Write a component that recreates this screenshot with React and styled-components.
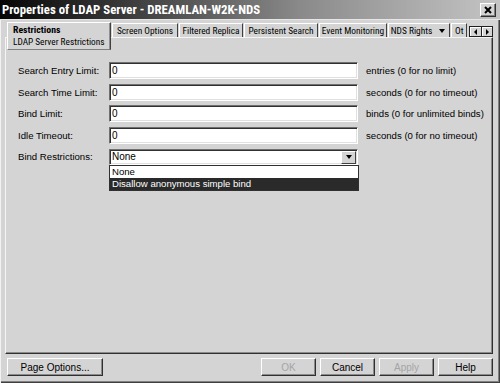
import React from "react";
import styled, { createGlobalStyle } from "styled-components";

const Global = createGlobalStyle`
  html, body { margin: 0; padding: 0; background: #d4d4d4; }
  * { box-sizing: border-box; }
`;

const BG = "#d4d4d4";
const UI = `"Liberation Sans", Arial, sans-serif`;
const NARROW = `"Roboto Condensed", "Liberation Sans", sans-serif`;

const Window = styled.div`
  width: 500px;
  height: 383px;
  background: ${BG};
  display: flex;
  flex-direction: column;
  box-shadow: inset 1px 0 0 #f2f2f2, inset -1px -1px 0 #404040, inset -2px -2px 0 #808080;
  font-family: ${UI};
  overflow: hidden;
`;

const TitleBar = styled.div`
  height: 20px;
  flex: none;
  display: flex;
  align-items: center;
  justify-content: space-between;
  padding: 0 4px 0 2px;
  background: linear-gradient(to right, #060606 0%, #3a3a3a 25%, #8a8a8a 60%, #c4c4c4 100%);
  border-bottom: 1px solid #e6e6e6;
`;

const Title = styled.div`
  font-family: ${NARROW};
  font-weight: bold;
  font-size: 12.8px;
  color: #fff;
  white-space: nowrap;
`;

const CloseBtn = styled.div`
  width: 16px;
  height: 14px;
  background: ${BG};
  border-top: 1px solid #fff;
  border-left: 1px solid #fff;
  border-right: 1px solid #303030;
  border-bottom: 1px solid #303030;
  box-shadow: inset -1px -1px 0 #808080;
  display: flex;
  align-items: center;
  justify-content: center;
`;

const Body = styled.div`
  flex: 1;
  display: flex;
  flex-direction: column;
  padding: 2px 7px 0 5px;
`;

const TabBar = styled.div`
  height: 15px;
  flex: none;
  display: flex;
  align-items: flex-start;
  padding-left: 2px;
`;

const TabList = styled.div`
  flex: 1;
  min-width: 0;
  display: flex;
  align-items: flex-start;
  overflow-x: clip;
  overflow-y: visible;
  position: relative;
  z-index: 2;
`;

const Tab = styled.div`
  flex: none;
  width: ${(p) => (p.$w ? `${p.$w}px` : "auto")};
  margin-top: ${(p) => (p.$active ? "0" : "1px")};
  margin-left: ${(p) => (p.$active ? "0" : "1px")};
  height: ${(p) => (p.$active ? "28px" : "14px")};
  background: ${BG};
  border-top: 1px solid #fff;
  border-left: 1px solid #fff;
  border-right: 1px solid #404040;
  border-bottom: ${(p) => (p.$active ? "1px solid #808080" : "none")};
  box-shadow: ${(p) => (p.$active ? "inset -1px 0 0 #909090" : "none")};
  padding: ${(p) => (p.$active ? "1px 0 0 5px" : "0 3px")};
  font-family: ${NARROW};
  font-size: 9.4px;
  line-height: 12px;
  color: #000;
  white-space: nowrap;
  display: flex;
  flex-direction: column;
  justify-content: ${(p) => (p.$active ? "flex-start" : "center")};
  align-items: ${(p) => (p.$active ? "flex-start" : "center")};
  overflow: hidden;
`;

const TabInner = styled.span`
  display: flex;
  align-items: center;
  gap: 7px;
  padding-right: 2px;
`;

const TabTitle = styled.span`
  font-weight: bold;
  font-size: 9.8px;
  line-height: 12px;
`;

const TabSub = styled.span`
  font-size: 9.3px;
  line-height: 11px;
`;

const TabArrows = styled.div`
  flex: none;
  margin-top: 4px;
  margin-left: 1px;
  display: flex;
  border: 1px solid #202020;
  background: ${BG};
  position: relative;
  z-index: 2;
`;

const ArrowBtn = styled.div`
  width: 11px;
  height: 9px;
  display: flex;
  align-items: center;
  justify-content: center;
  border-left: ${(p) => (p.$right ? "1px solid #202020" : "none")};
  box-shadow: inset 1px 1px 0 #fff;
`;

const Panel = styled.div`
  flex: 1;
  border-top: 1px solid #f4f4f4;
  border-left: 1px solid #f4f4f4;
  border-right: 1px solid #303030;
  border-bottom: 1px solid #303030;
  box-shadow: inset -1px -1px 0 #8a8a8a;
  padding: 24px 0 0 12px;
`;

const Form = styled.div`
  display: grid;
  grid-template-columns: 91px 249px 1fr;
  grid-auto-rows: 17px;
  row-gap: 4.5px;
  align-items: center;
`;

const Label = styled.div`
  font-size: 9.6px;
  color: #000;
  white-space: nowrap;
`;

const Input = styled.div`
  height: ${(p) => (p.$short ? "16px" : "17px")};
  background: #fff;
  border-top: 1px solid #707070;
  border-left: 1px solid #707070;
  border-right: 1px solid #fff;
  border-bottom: 1px solid #fff;
  box-shadow: inset 1px 1px 0 #303030, inset -1px -1px 0 #e0e0e0;
  padding-left: 2px;
  font-size: 10px;
  line-height: 15px;
  color: #000;
  position: relative;
  display: flex;
  align-items: center;
`;

const Unit = styled.div`
  padding-left: 8px;
  font-size: 9.6px;
  color: #000;
  white-space: nowrap;
`;

const SelectBtn = styled.div`
  position: absolute;
  right: 1px;
  top: 1px;
  width: 15px;
  height: 13px;
  background: ${BG};
  border-top: 1px solid #fff;
  border-left: 1px solid #fff;
  border-right: 1px solid #404040;
  border-bottom: 1px solid #404040;
  display: flex;
  align-items: center;
  justify-content: center;
`;

const DropList = styled.div`
  position: absolute;
  left: -1px;
  top: 15px;
  width: 250px;
  background: #fff;
  border: 1px solid #303030;
  z-index: 5;
`;

const DropItem = styled.div`
  height: 12px;
  padding-left: 2px;
  font-size: 9.6px;
  line-height: 12px;
  color: ${(p) => (p.$sel ? "#fff" : "#000")};
  background: ${(p) => (p.$sel ? "#2a2a2a" : "#fff")};
  white-space: nowrap;
`;

const Footer = styled.div`
  flex: none;
  display: flex;
  justify-content: space-between;
  padding: 4px 0 7px 2px;
`;

const BtnGroup = styled.div`
  display: flex;
  gap: 4px;
`;

const Button = styled.div`
  width: ${(p) => p.$w || 55}px;
  height: 18px;
  background: ${BG};
  border-top: 1px solid #fff;
  border-left: 1px solid #fff;
  border-right: 1px solid #303030;
  border-bottom: 1px solid #303030;
  box-shadow: inset -1px -1px 0 #8a8a8a;
  display: flex;
  align-items: center;
  justify-content: center;
  font-size: 10px;
  color: ${(p) => (p.$disabled ? "#a4a4a4" : "#000")};
`;

const Tri = ({ dir = "down" }) => {
  const pts = {
    down: "0,1 6,1 3,5",
    left: "4,0 4,6 1,3",
    right: "1,0 1,6 4,3",
  }[dir];
  return (
    <svg width={dir === "down" ? 6 : 5} height={6} viewBox={dir === "down" ? "0 0 6 6" : "0 0 5 6"}>
      <polygon points={pts} fill="#000" />
    </svg>
  );
};

const rows = [
  ["Search Entry Limit:", "0", "entries (0 for no limit)"],
  ["Search Time Limit:", "0", "seconds (0 for no timeout)"],
  ["Bind Limit:", "0", "binds (0 for unlimited binds)"],
  ["Idle Timeout:", "0", "seconds (0 for no timeout)"],
];

const tabs = [
  ["Screen Options", 66],
  ["Filtered Replica", 64],
  ["Persistent Search", 74],
  ["Event Monitoring", 68],
];

export default function App() {
  return (
    <Window>
      <Global />
      <TitleBar>
        <Title>Properties of LDAP Server - DREAMLAN-W2K-NDS</Title>
        <CloseBtn>
          <svg width="8" height="8" viewBox="0 0 8 8">
            <path d="M1 1 L7 7 M7 1 L1 7" stroke="#000" strokeWidth="2" />
          </svg>
        </CloseBtn>
      </TitleBar>
      <Body>
        <TabBar>
          <TabList>
            <Tab $active $w={104}>
              <TabTitle>Restrictions</TabTitle>
              <TabSub>LDAP Server Restrictions</TabSub>
            </Tab>
            {tabs.map(([t, w]) => (
              <Tab key={t} $w={w}>
                {t}
              </Tab>
            ))}
            <Tab $w={62}>
              <TabInner>
                NDS Rights <Tri dir="down" />
              </TabInner>
            </Tab>
            <Tab>Ot</Tab>
          </TabList>
          <TabArrows>
            <ArrowBtn>
              <Tri dir="left" />
            </ArrowBtn>
            <ArrowBtn $right>
              <Tri dir="right" />
            </ArrowBtn>
          </TabArrows>
        </TabBar>
        <Panel>
          <Form>
            {rows.map(([l, v, u]) => (
              <React.Fragment key={l}>
                <Label>{l}</Label>
                <Input>{v}</Input>
                <Unit>{u}</Unit>
              </React.Fragment>
            ))}
            <Label>Bind Restrictions:</Label>
            <Input $short>
              None
              <SelectBtn>
                <Tri dir="down" />
              </SelectBtn>
              <DropList>
                <DropItem>None</DropItem>
                <DropItem $sel>Disallow anonymous simple bind</DropItem>
              </DropList>
            </Input>
            <Unit />
          </Form>
        </Panel>
        <Footer>
          <Button $w={96}>Page Options...</Button>
          <BtnGroup>
            <Button $disabled>OK</Button>
            <Button>Cancel</Button>
            <Button $disabled>Apply</Button>
            <Button>Help</Button>
          </BtnGroup>
        </Footer>
      </Body>
    </Window>
  );
}
